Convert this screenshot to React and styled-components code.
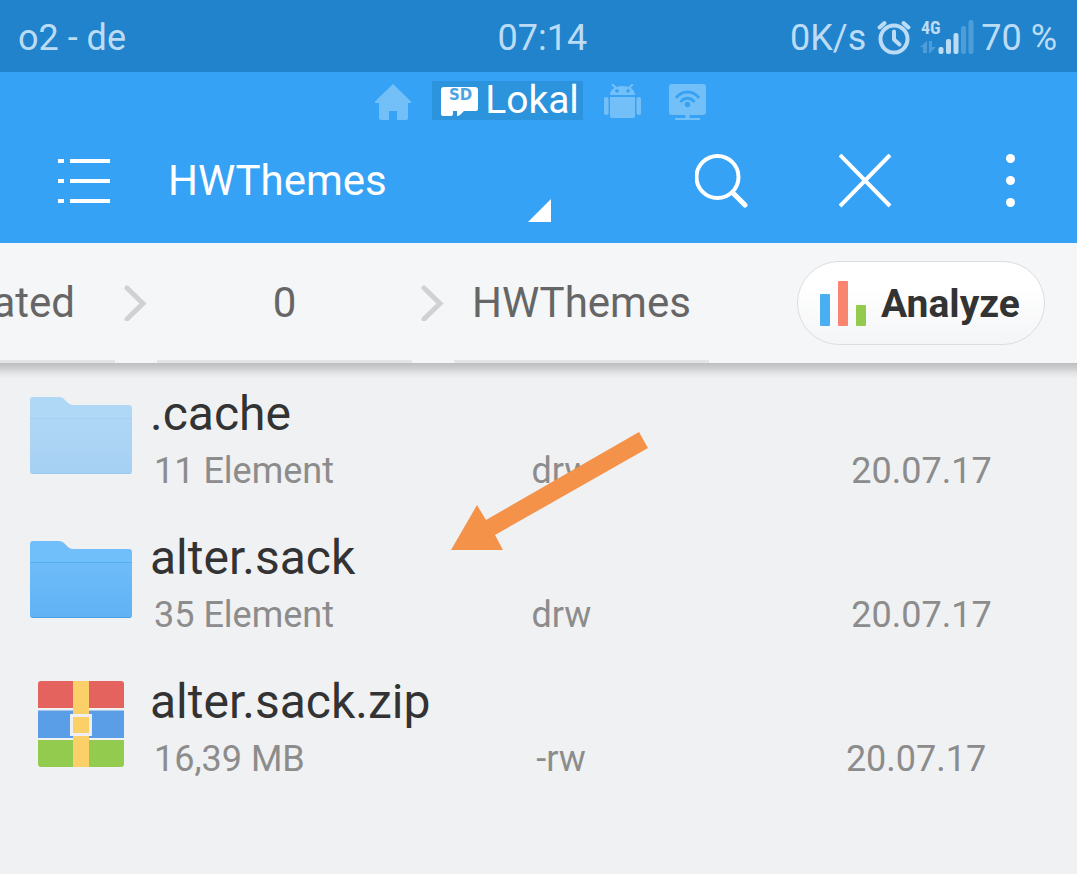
import React from 'react'
import styled, { createGlobalStyle } from 'styled-components'

const GlobalStyle = createGlobalStyle`
    * {
        box-sizing: border-box;
    }
    body {
        margin: 0;
        background: #f0f1f3;
        font-family: Roboto, "Liberation Sans", sans-serif;
    }
    button {
        margin: 0;
        padding: 0;
        border: 0;
        background: none;
        color: inherit;
        font-family: inherit;
        cursor: pointer;
    }
    svg {
        display: block;
        flex: none;
    }
`

const Page = styled.div`
    min-height: 100vh;
    overflow: hidden;
`

/* status bar */
const StatusBar = styled.div`
    display: grid;
    grid-template-columns: 6fr 7fr;
    align-items: center;
    height: 72px;
    padding: 3px 20px 0 18px;
    background: #2083cc;
    color: #bcdcf5;
    font-size: 36px;
    white-space: nowrap;
`

const StatusRight = styled.div`
    display: flex;
    align-items: center;
    justify-content: space-between;
`

const StatusIcons = styled.div`
    display: flex;
    align-items: center;
    gap: 6px;
`

/* blue header */
const Header = styled.header`
    background: #36a2f5;
    color: #fff;
`

const Tabs = styled.nav`
    display: flex;
    justify-content: center;
    padding: 9px 0 0 4px;
`

const Tab = styled.button`
    display: flex;
    align-items: center;
    height: 39px;
    margin: ${({ $active }) => ($active ? '0 7px' : '0')};
    padding: ${({ $active }) => ($active ? '0 4px 0 9px' : '3px 14px 0')};
    gap: 7px;
    background: ${({ $active }) => ($active ? '#2c93dd' : 'none')};
    color: ${({ $active }) => ($active ? '#fff' : '#73bff8')};
    font-size: 39px;
    line-height: 39px;
`

const Toolbar = styled.div`
    display: flex;
    align-items: center;
    gap: 90px;
    height: 123px;
    padding: 0 40px 2px 57px;
`

const Place = styled.div`
    display: flex;
    flex: 1;
    align-items: center;
    gap: 57px;
    margin-right: 54px;
`

const IconButton = styled.button`
    width: 54px;
    height: 54px;
`

const Title = styled.button`
    display: flex;
    flex: 1;
    align-items: center;
    justify-content: space-between;
    height: 82px;
    font-size: 42px;
`

const Corner = styled.svg`
    align-self: flex-end;
`

/* path */
const PathBar = styled.div`
    display: flex;
    align-items: center;
    height: 120px;
    padding-right: 32px;
    background: #f5f6f8;
`

const Trail = styled.nav`
    display: flex;
    flex: 1;
    justify-content: flex-end;
    align-items: center;
    height: 100%;
    margin-right: 88px;
    overflow: hidden;
`

const Crumb = styled.a`
    flex: none;
    width: 255px;
    height: 100%;
    border-bottom: 3px solid #e4e5e7;
    color: #666;
    font-size: 42px;
    line-height: 120px;
    text-align: center;
    text-decoration: none;
`

const Analyze = styled.button`
    display: flex;
    align-items: center;
    gap: 15px;
    width: 248px;
    height: 84px;
    padding: 2px 0 0 22px;
    border: 1px solid #dcddde;
    border-radius: 42px;
    background: linear-gradient(#fff 30%, #f4f5f7);
    color: #333;
    font-size: 39px;
    font-weight: 700;
`

/* files */
const List = styled.ul`
    position: relative;
    margin: 0;
    padding: 1px 0 0;
    list-style: none;
    background: linear-gradient(#bcbebf, #cbcdce 5px, #e2e4e5 10px, #f0f1f3 16px);
`

const Row = styled.li`
    display: flex;
    align-items: center;
    gap: 18px;
    height: 144px;
    padding: 0 74px 0 30px;
`

const Thumb = styled.div`
    display: flex;
    justify-content: center;
    width: 102px;
    opacity: ${({ $hidden }) => ($hidden ? 0.5 : 1)};
`

const Info = styled.div`
    flex: 1;
    padding-top: 12px;
`

const Name = styled.div`
    color: #333;
    font-size: 48px;
    line-height: 58px;
`

const Meta = styled.div`
    display: grid;
    grid-template-columns: 11fr auto 12fr;
    padding-left: 4px;
    color: #8c8c8c;
    font-size: 36px;
    line-height: 56px;
    white-space: nowrap;
`

const FileDate = styled.span`
    padding-left: 260px;
`

/* pointer laid over the rows */
const Pointer = styled.li`
    position: absolute;
    top: 69px;
    left: 451px;
`

const AlarmIcon = () => (
    <svg width="42" height="36" viewBox="0 0 42 36" fill="none" stroke="currentColor" strokeWidth="4">
        <circle cx="22" cy="19" r="13.5" />
        <path d="M22 11.5v8l5.5 5" strokeLinecap="round" strokeLinejoin="round" />
        <path d="M7.5 7.5l5-4.5M36.5 7.5l-5-4.5" strokeLinecap="round" />
    </svg>
)

const SignalIcon = () => (
    <svg width="55" height="38" viewBox="0 0 55 38" fill="currentColor">
        <text x="1" y="15" fontFamily="'Roboto Condensed', 'Liberation Sans Narrow', Roboto, sans-serif" fontSize="18" fontWeight="700">4G</text>
        <path d="M7 22v12H3v-6H0zM9 22h3v6h4l-6 6H9z" opacity=".3" />
        <rect x="18.5" y="28" width="5" height="7" rx="2" />
        <rect x="26" y="20" width="5" height="15" rx="2" />
        <rect x="33.5" y="14" width="5" height="21" rx="2" />
        <rect x="41" y="7" width="5" height="28" rx="2" opacity=".3" />
        <rect x="48.5" y="1" width="5" height="34" rx="2" opacity=".3" />
    </svg>
)

const HomeIcon = () => (
    <svg width="36" height="36" viewBox="0 0 36 36" fill="currentColor">
        <path d="M18 0L36 17.5V19h-3v15q0 2-2 2h-9v-9h-8v9H6q-2 0-2-2V19H0v-1.5z" />
    </svg>
)

const SdIcon = () => (
    <svg width="37" height="30" viewBox="0 0 37 30" fill="currentColor">
        <path d="M3 1h31q3 0 3 3v19q0 2-2 2H23l-4 4q-1 1-3 1v-5h-4v3q0 2-2 2H2q-2 0-2-2V4q0-3 3-3z" />
        <text x="8" y="14" fill="#4da3e3" fontFamily="'DejaVu Sans', sans-serif" fontSize="15" fontWeight="700">SD</text>
    </svg>
)

const AndroidIcon = () => (
    <svg width="37" height="36" viewBox="0 0 37 36" fill="currentColor">
        <path d="M8 0l4 4M29 0l-4 4" stroke="currentColor" strokeWidth="2" />
        <path fillRule="evenodd" d="M6 11c0-12 25-12 25 0zM13 5a1.8 1.8 0 1 0 .1 0zM24 5a1.8 1.8 0 1 0 .1 0z" />
        <path d="M6 13h25v19q0 2-2 2H8q-2 0-2-2z" />
        <rect x="0" y="13" width="4.5" height="18" rx="2" />
        <rect x="32.5" y="13" width="4.5" height="18" rx="2" />
    </svg>
)

const NetworkIcon = () => (
    <svg width="37" height="36" viewBox="0 0 37 36" fill="currentColor">
        <rect width="37" height="31" rx="3" />
        <path d="M16.5 31h4v3H31v2H6v-2h10.5z" />
        <g fill="none" stroke="#36a2f5" strokeWidth="2.8">
            <path d="M7 14c6-8 17-8 23 0" />
            <path d="M11.500 18c4-5 10-5 14 0" />
        </g>
        <circle cx="18.5" cy="20.5" r="2.7" fill="#36a2f5" />
    </svg>
)

const MenuIcon = () => (
    <svg width="54" height="54" viewBox="0 0 54 54" stroke="currentColor" strokeWidth="4">
        <path d="M1 7h6M13 7h40M1 27h6M13 27h40M1 47h6M13 47h40" />
    </svg>
)

const SearchIcon = () => (
    <svg width="54" height="54" viewBox="0 0 54 54" fill="none" stroke="currentColor" strokeWidth="4">
        <circle cx="22.5" cy="23" r="21" />
        <path d="M38 39l12 12" strokeWidth="5" strokeLinecap="round" />
    </svg>
)

const CloseIcon = () => (
    <svg width="54" height="54" viewBox="0 0 54 54" stroke="currentColor" strokeWidth="4">
        <path d="M1 1l50 51M51 1L1 52" />
    </svg>
)

const MoreIcon = () => (
    <svg width="54" height="54" viewBox="0 0 54 54" fill="currentColor">
        <circle cx="27.5" cy="4.5" r="4.5" />
        <circle cx="27.5" cy="26.5" r="4.5" />
        <circle cx="27.5" cy="48.5" r="4.5" />
    </svg>
)

const Chevron = () => (
    <svg width="42" height="36" viewBox="0 0 42 36" fill="none" stroke="#d0d1d3" strokeWidth="5">
        <path d="M12 3l16 15.5L12 34" strokeLinecap="round" />
    </svg>
)

const ChartIcon = () => (
    <svg width="46" height="46" viewBox="0 0 46 46">
        <rect x="0" y="13" width="10" height="32" rx="1" fill="#4aaef2" />
        <rect x="18" y="0" width="10" height="45" rx="1" fill="#f98470" />
        <rect x="36" y="24" width="10" height="21" rx="1" fill="#93cb4e" />
    </svg>
)

const FolderIcon = () => (
    <svg width="102" height="78" viewBox="0 0 102 78">
        <defs>
            <linearGradient id="front" x1="0" y1="0" x2="0" y2="1">
                <stop offset="0" stopColor="#6fbcf9" />
                <stop offset="1" stopColor="#5fb2f4" />
            </linearGradient>
        </defs>
        <path d="M3 0h26q3 0 5 2l4 4q2 2 5 2h56q3 0 3 3v63q0 3-3 3H3q-3 0-3-3V3q0-3 3-3z" fill="#70bffa" />
        <path d="M0 21h102v53q0 3-3 3H3q-3 0-3-3z" fill="url(#front)" />
        <path d="M0 21.5h102" stroke="#55adf2" />
        <path d="M2 76.5h98" stroke="#4a9fe6" />
    </svg>
)

const ZipIcon = () => (
    <svg width="86" height="86" viewBox="0 0 86 86">
        <path d="M3 0h80q3 0 3 3v24H0V3q0-3 3-3z" fill="#e5635f" />
        <path d="M0 29.5h86V57H0z" fill="#5a9ee8" />
        <path d="M0 59h86v24q0 3-3 3H3q-3 0-3-3z" fill="#93cb4e" />
        <path d="M35 0h16v86H35z" fill="#fbd069" />
        <path d="M33.5 34.500h19v19h-19z" fill="#fbd069" stroke="#edeff2" strokeWidth="3" />
    </svg>
)

const files = [
    { name: '.cache', size: '11 Element', mode: 'drw', date: '20.07.17', hidden: true },
    { name: 'alter.sack', size: '35 Element', mode: 'drw', date: '20.07.17' },
    { name: 'alter.sack.zip', size: '16,39 MB', mode: '-rw', date: '20.07.17', zip: true },
]

const App = () => {
    return (
        <>
        <GlobalStyle />
        <Page>
            <StatusBar>
                <span>o2 - de</span>
                <StatusRight>
                    <span>07:14</span>
                    <StatusIcons>
                        <span>0K/s</span>
                        <AlarmIcon />
                        <SignalIcon />
                        <span>70 %</span>
                    </StatusIcons>
                </StatusRight>
            </StatusBar>
            <Header>
                <Tabs>
                    <Tab aria-label="Home"><HomeIcon /></Tab>
                    <Tab $active><SdIcon />Lokal</Tab>
                    <Tab aria-label="Apps"><AndroidIcon /></Tab>
                    <Tab aria-label="Network"><NetworkIcon /></Tab>
                </Tabs>
                <Toolbar>
                    <Place>
                        <IconButton aria-label="Menu"><MenuIcon /></IconButton>
                        <Title>
                            HWThemes
                            <Corner width="23" height="23" viewBox="0 0 23 23" fill="currentColor">
                                <path d="M23 0v23H0z" />
                            </Corner>
                        </Title>
                    </Place>
                    <IconButton aria-label="Search"><SearchIcon /></IconButton>
                    <IconButton aria-label="Close"><CloseIcon /></IconButton>
                    <IconButton aria-label="More"><MoreIcon /></IconButton>
                </Toolbar>
            </Header>
            <PathBar>
                <Trail>
                    <Crumb href="#emulated">emulated</Crumb>
                    <Chevron />
                    <Crumb href="#0">0</Crumb>
                    <Chevron />
                    <Crumb href="#HWThemes">HWThemes</Crumb>
                </Trail>
                <Analyze><ChartIcon />Analyze</Analyze>
            </PathBar>
            <List>
                {files.map((file) => (
                    <Row key={file.name}>
                        <Thumb $hidden={file.hidden}>
                            {file.zip ? <ZipIcon /> : <FolderIcon />}
                        </Thumb>
                        <Info>
                            <Name>{file.name}</Name>
                            <Meta>
                                <span>{file.size}</span>
                                <span>{file.mode}</span>
                                <FileDate>{file.date}</FileDate>
                            </Meta>
                        </Info>
                    </Row>
                ))}
                <Pointer aria-hidden="true">
                    <svg width="198" height="119" viewBox="0 0 198 119" fill="#f4924a">
                        <path d="M0 118L26 73l9 15L188 0l9 16L44 103l8 15z" />
                    </svg>
                </Pointer>
            </List>
        </Page>
        </>
    )
}

export default App
